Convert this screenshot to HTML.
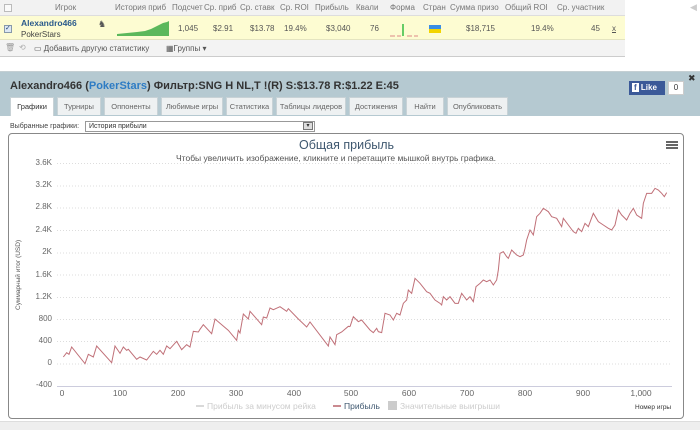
<!DOCTYPE html>
<html><head><meta charset="utf-8"><style>
*{margin:0;padding:0;box-sizing:border-box}
body{width:700px;height:430px;background:#fff;font-family:"Liberation Sans",sans-serif;position:relative;overflow:hidden;color:#333}
.a{position:absolute;white-space:nowrap}
.hd{font-size:8px;color:#777;top:3px}
.dv{font-size:8px;color:#555}
.tab{position:absolute;top:97px;height:18px;border:1px solid #c8d2d6;border-bottom:none;background:#eef1f2;font-size:7.5px;color:#666;text-align:center;line-height:17px}
.yl{position:absolute;left:24px;width:28px;text-align:right;font-size:8px;color:#666}
.xl{position:absolute;top:388px;font-size:8.5px;color:#666;transform:translateX(-50%)}
</style></head><body>
<div class="a" style="left:0;top:0;width:625px;height:57px;border-right:1px solid #ccc;border-bottom:2px solid #ccc;background:#f4f4f4"></div>
<div class="a" style="left:0;top:0;width:625px;height:16px;background:#f2f2f2;border-bottom:1px solid #ddd"></div>
<div class="a" style="left:0;top:16px;width:625px;height:24px;background:#fdfcd2;border-bottom:1px solid #e4e4c0"></div>
<div class="a" style="left:0;top:40px;width:625px;height:16px;background:#f3f3f3"></div>
<div class="a" style="left:4px;top:4px;width:8px;height:8px;border:1px solid #bbb;background:#fafafa"></div>
<div class="a hd" style="left:55px">Игрок</div>
<div class="a hd" style="left:115px">История приб</div>
<div class="a hd" style="left:172px">Подсчет</div>
<div class="a hd" style="left:204px">Ср. приб</div>
<div class="a hd" style="left:240px">Ср. ставк</div>
<div class="a hd" style="left:280px">Ср. ROI</div>
<div class="a hd" style="left:315px">Прибыль</div>
<div class="a hd" style="left:356px">Квали</div>
<div class="a hd" style="left:390px">Форма</div>
<div class="a hd" style="left:423px">Стран</div>
<div class="a hd" style="left:450px">Сумма призо</div>
<div class="a hd" style="left:505px">Общий ROI</div>
<div class="a hd" style="left:557px">Ср. участник</div>
<div class="a" style="left:4px;top:25px;width:8px;height:8px;border:1px solid #89a;background:#dde8f4;font-size:7px;line-height:6px;color:#247">✓</div>
<div class="a" style="left:21px;top:18px;font-size:8.5px;font-weight:bold;color:#2a5a8c">Alexandro466</div>
<div class="a" style="left:21px;top:30px;font-size:8px;color:#444">PokerStars</div>
<div class="a" style="left:98px;top:19px;font-size:9px;color:#555">♞</div>
<svg class="a" style="left:117px;top:20px" width="52" height="16"><path d="M0,16 L0,14 10,13 20,12 28,11 34,9 38,7 42,5 46,3 50,2 52,1 52,16Z" fill="#5cb85c"/></svg>
<div class="a dv" style="left:178px;top:24px">1,045</div>
<div class="a dv" style="left:213px;top:24px">$2.91</div>
<div class="a dv" style="left:250px;top:24px">$13.78</div>
<div class="a dv" style="left:284px;top:24px">19.4%</div>
<div class="a dv" style="left:326px;top:24px">$3,040</div>
<div class="a dv" style="left:370px;top:24px">76</div>
<svg class="a" style="left:390px;top:22px" width="28" height="16"><path d="M0,14h5M7,14h4M17,14h5M24,14h4" stroke="#d88" stroke-width="1"/><path d="M13,2v12" stroke="#6c6" stroke-width="2"/></svg>
<div class="a" style="left:429px;top:25px;width:12px;height:4px;background:#3a8ee6"></div>
<div class="a" style="left:429px;top:29px;width:12px;height:4px;background:#f2d400"></div>
<div class="a dv" style="left:466px;top:24px">$18,715</div>
<div class="a dv" style="left:531px;top:24px">19.4%</div>
<div class="a dv" style="left:591px;top:24px">45</div>
<div class="a dv" style="left:612px;top:24px;text-decoration:underline">x</div>
<div class="a" style="left:5px;top:43px;font-size:8px;color:#999">🗑</div>
<div class="a" style="left:19px;top:43px;font-size:8px;color:#aaa">⟲</div>
<div class="a" style="left:34px;top:44px;font-size:8px;color:#555">▭ Добавить другую статистику</div>
<div class="a" style="left:166px;top:44px;font-size:8px;color:#555">▦Группы ▾</div>
<div class="a" style="left:690px;top:2px;font-size:9px;color:#ccc">◀</div>
<div class="a" style="left:0;top:71px;width:700px;height:359px;border-top:1px solid #c4cfd3;background:#fff"></div>
<div class="a" style="left:0;top:72px;width:700px;height:44px;background:#b5c9d1"></div>
<div class="a" style="left:10px;top:80px;font-size:11px;font-weight:bold;color:#333">Alexandro466 (<span style="color:#2e7cc4">PokerStars</span>) Фильтр:SNG H NL,T !(R) S:$13.78 R:$1.22 E:45</div>
<div class="a" style="left:629px;top:81px;width:36px;height:14px;background:#3b5998;color:#fff;font-size:8px;font-weight:bold;line-height:14px;padding-left:3px"><span style="background:#fff;color:#3b5998;padding:0 2px">f</span> Like</div>
<div class="a" style="left:668px;top:81px;width:16px;height:14px;background:#fff;border:1px solid #ccc;font-size:8px;text-align:center;line-height:12px">0</div>
<div class="a" style="left:688px;top:73px;font-size:9px;color:#333">✖</div>
<div class="tab" style="left:10px;width:44px;background:#fff;color:#333;height:19px">Графики</div>
<div class="tab" style="left:57px;width:44px">Турниры</div>
<div class="tab" style="left:104px;width:54px">Оппоненты</div>
<div class="tab" style="left:161px;width:62px">Любимые игры</div>
<div class="tab" style="left:226px;width:47px">Статистика</div>
<div class="tab" style="left:276px;width:70px">Таблицы лидеров</div>
<div class="tab" style="left:349px;width:54px">Достижения</div>
<div class="tab" style="left:406px;width:38px">Найти</div>
<div class="tab" style="left:447px;width:61px">Опубликовать</div>
<div class="a" style="left:10px;top:123px;font-size:7px;color:#444">Выбранные графики:</div>
<div class="a" style="left:85px;top:121px;width:230px;height:11px;border:1px solid #999;font-size:7px;line-height:9px;padding-left:3px;color:#333">История прибыли</div>
<div class="a" style="left:303px;top:122px;width:10px;height:8px;border:1px solid #777;background:#ddd;font-size:6px;text-align:center;line-height:6px">▾</div>
<div class="a" style="left:8px;top:133px;width:676px;height:286px;border:1px solid #888;border-radius:4px"></div>
<div class="a" style="left:0;top:421px;width:700px;height:9px;background:#eee;border-top:1px solid #ddd"></div>
<div class="a" style="left:299px;top:138px;font-size:12.5px;color:#3e576f">Общая прибыль</div>
<div class="a" style="left:176px;top:153px;font-size:8.5px;color:#555">Чтобы увеличить изображение, кликните и перетащите мышкой внутрь графика.</div>
<div class="a" style="left:666px;top:141px;width:12px;height:2px;background:#666;box-shadow:0 3px 0 #666,0 6px 0 #666"></div>
<div class="yl" style="top:158px">3.6K</div><div class="yl" style="top:180px">3.2K</div><div class="yl" style="top:202px">2.8K</div><div class="yl" style="top:225px">2.4K</div><div class="yl" style="top:247px">2K</div><div class="yl" style="top:270px">1.6K</div><div class="yl" style="top:292px">1.2K</div><div class="yl" style="top:314px">800</div><div class="yl" style="top:336px">400</div><div class="yl" style="top:358px">0</div><div class="yl" style="top:380px">-400</div>
<div class="a" style="left:15px;top:310px;font-size:6.5px;color:#555;transform:rotate(-90deg);transform-origin:0 0">Суммарный итог (USD)</div>
<svg class="a" style="left:0;top:0" width="700" height="430">
<g stroke="#ddd" stroke-dasharray="1,2" stroke-width="1">
<path d="M57,163.5H672M57,186H672M57,208H672M57,230.5H672M57,253H672M57,275H672M57,297.5H672M57,319.5H672M57,341.5H672M57,364H672"/>
</g>
<path d="M57,386.5H672" stroke="#ccd" stroke-width="1"/>
<g transform="translate(0,140) scale(0.33333)"><polyline fill="none" stroke="#c07078" stroke-width="1" vector-effect="non-scaling-stroke" points="190,651 200,638 207,643 215,621 255,671 265,643 280,651 290,618 335,668 345,618 360,640 370,621 380,631 385,628 410,658 420,651 440,660 460,634 470,643 480,631 490,643 500,618 510,626 530,604 545,629 560,614 570,621 580,574 595,576 600,568 610,554 635,581 645,537 685,571 710,601 715,571 720,579 730,522 745,537 750,514 785,554 790,531 800,534 810,504 820,509 840,500 860,514 865,506 895,537 920,561 930,546 985,618 990,591 1005,614 1010,584 1025,576 1045,559 1050,560"/></g>
<g transform="translate(350,140) scale(0.33333)"><polyline fill="none" stroke="#c07078" stroke-width="1" vector-effect="non-scaling-stroke" points="0,560 10,530 25,545 35,540 60,570 70,578 80,565 85,575 95,578 105,520 120,525 130,540 140,520 150,525 160,490 170,480 175,450 185,460 195,415 210,430 230,455 240,460 255,480 270,490 275,495 280,470 290,480 300,470 315,490 325,490 335,460 350,480 360,470 370,485 378,440 390,430 400,420 410,425 420,420 430,435 440,420 445,390 450,340 460,335 470,350 475,355 485,330 500,345 510,350 520,345 525,325 530,300 540,270 550,285 560,230 570,220 580,205 595,215 605,230 620,235 635,260 640,235 655,255 670,275 678,280 685,265 695,275 705,250 715,260 730,220 745,245 760,255 775,265 785,270 795,255 805,210 815,225 830,240 840,220 850,205 860,225 875,235 880,190 890,160 905,160 915,145 925,150 935,160 943,170 950,158"/></g>
<path d="M196,406h8" stroke="#ccc" stroke-width="1.5"/>
<path d="M333,406h8" stroke="#b9636b" stroke-width="1.5"/>
<rect x="388" y="401" width="9" height="9" fill="#ccc"/>
</svg>
<div class="xl" style="left:62px">0</div><div class="xl" style="left:120px">100</div><div class="xl" style="left:178px">200</div><div class="xl" style="left:236px">300</div><div class="xl" style="left:294px">400</div><div class="xl" style="left:351px">500</div><div class="xl" style="left:409px">600</div><div class="xl" style="left:467px">700</div><div class="xl" style="left:525px">800</div><div class="xl" style="left:583px">900</div><div class="xl" style="left:641px">1,000</div>
<div class="a" style="left:207px;top:401px;font-size:8.5px;color:#ccc">Прибыль за минусом рейка</div>
<div class="a" style="left:344px;top:401px;font-size:8.5px;color:#3e576f">Прибыль</div>
<div class="a" style="left:400px;top:401px;font-size:8.5px;color:#ccc">Значительные выигрыши</div>
<div class="a" style="left:635px;top:404px;font-size:6.5px;color:#333">Номер игры</div>
</body></html>
